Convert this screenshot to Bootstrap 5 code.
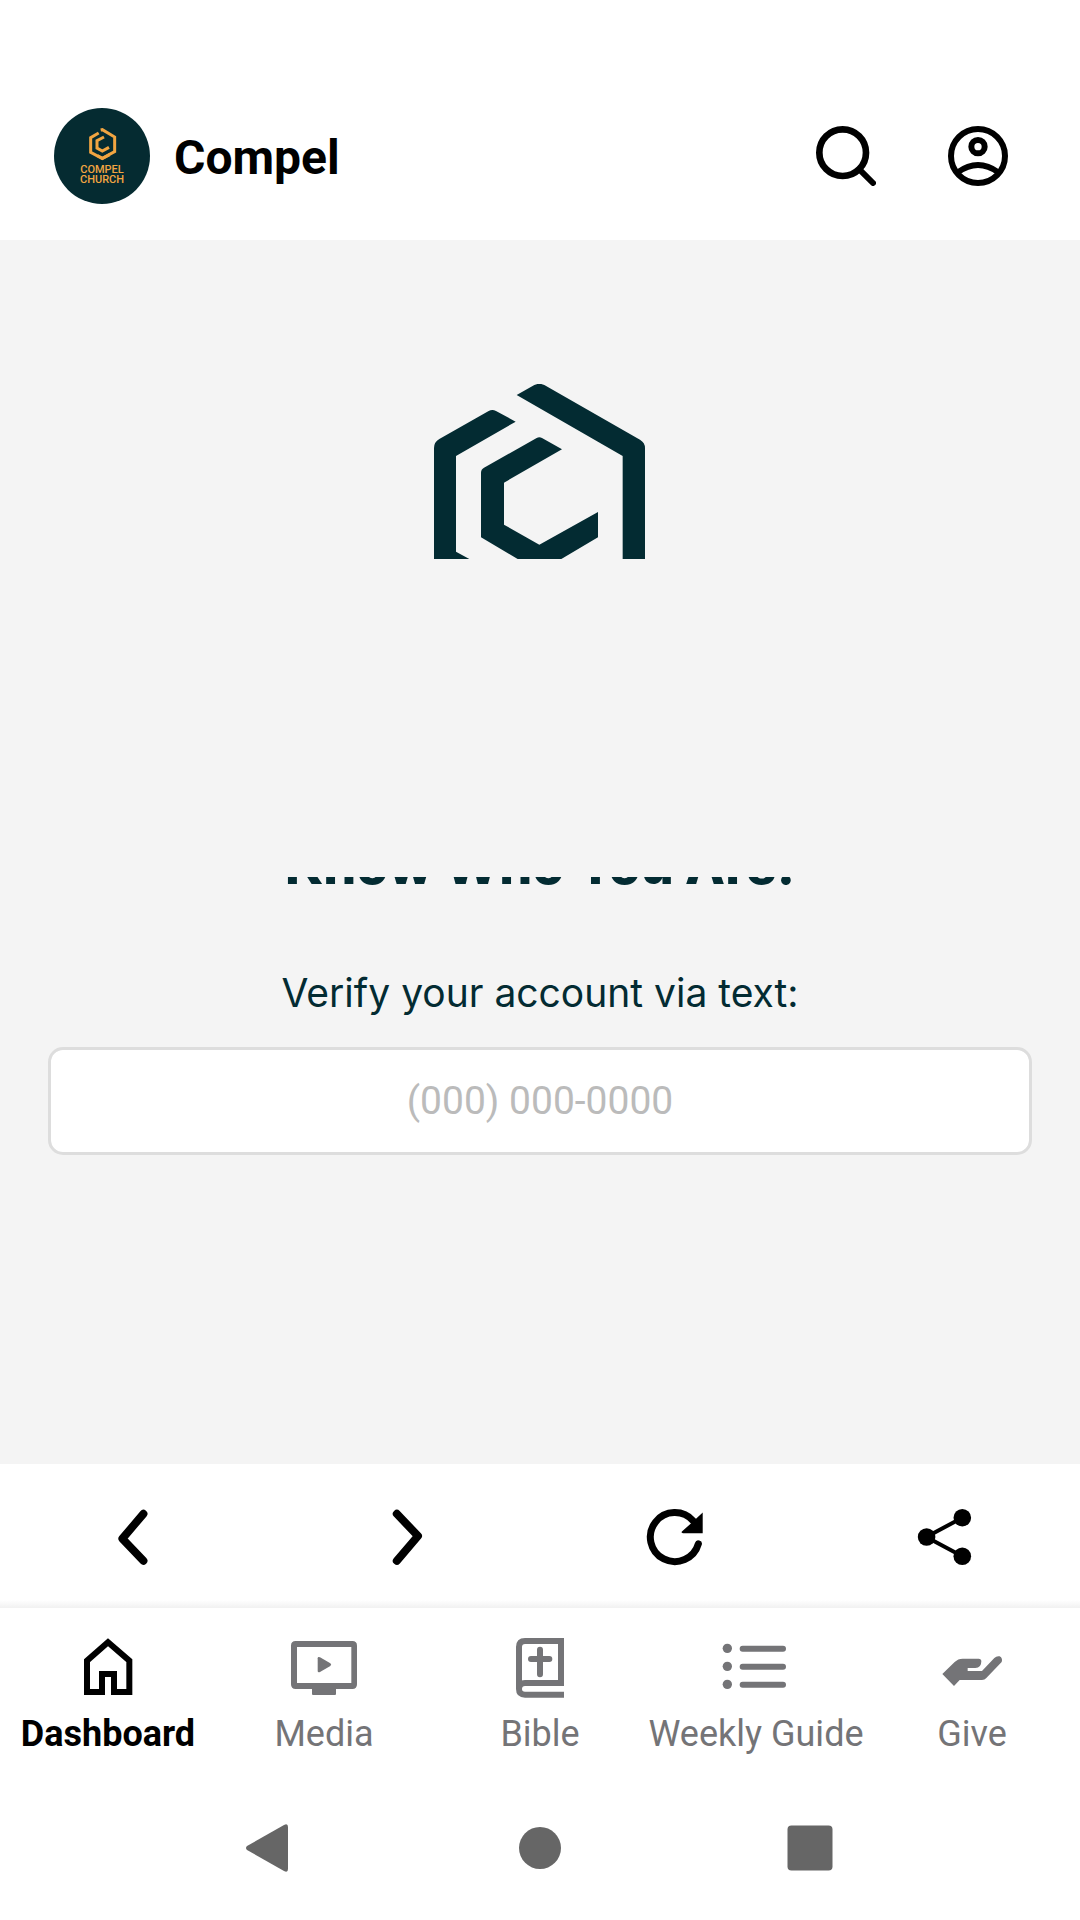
<!DOCTYPE html>
<html lang="en">
<head>
<meta charset="utf-8">
<meta name="viewport" content="width=device-width, initial-scale=1">
<title>Compel</title>
<link href="https://cdn.jsdelivr.net/npm/bootstrap@5.3.0/dist/css/bootstrap.min.css" rel="stylesheet">
<style>
  body { font-family: Roboto, sans-serif; background: #fff; color: #000; }
  svg { display: block; }
  .app-header { padding: 108px 72px 36px 54px; }
  .brand { gap: 24px; color: #000; font-size: 48px; line-height: 60px; font-weight: 700; }
  .brand-name { padding-top: 4px; }
  .header-actions { gap: 72px; }
  .plain-btn { background: none; border: 0; padding: 0; color: inherit; }
  .panel { background: #f4f4f4; color: #032b32; padding: 144px 48px 48px; }
  .headline-strip { height: 8px; margin-top: 318px; overflow: hidden; }
  .headline { font: 800 52px/52px Inter, sans-serif; margin: 0 0 -7px; white-space: nowrap; }
  .verify-label { font: 400 39px/48px Inter, sans-serif; margin: 84px 0 30px; }
  .phone { height: 108px; border: 3px solid #ddd; border-radius: 15px; font-size: 39px; text-align: center; }
  .phone::placeholder { color: #bbb; opacity: 1; }
  .browser-bar { height: 144px; background: linear-gradient(#fff 0, #fff 136px, #f1f1f1 144px); }
  .tab-row { height: 168px; padding-top: 22px; }
  .tab-item { gap: 10px; width: 20%; color: #747477; font-size: 36px; line-height: 44px; text-decoration: none; white-space: nowrap; }
  .tab-item.current { color: #000; font-weight: 700; }
  .system-row { height: 144px; padding: 0 135px; color: #666; }
</style>
</head>
<body class="d-flex flex-column min-vh-100">
<header class="app-header d-flex align-items-center justify-content-between">
  <a href="#" class="brand d-flex align-items-center text-decoration-none">
    <svg width="96" height="96" viewBox="0 0 96 96" aria-hidden="true">
      <circle cx="48" cy="48" r="48" fill="#052b31"/>
      <svg width="96" height="96" viewBox="42 54 288 288" fill="none" stroke="#f2a541" stroke-width="9">
        <path d="M182 120 L187 119 L224 141 V185 L187 205 L172 197"/>
        <path d="M176 129 L152 143 V187 L187 206 L209 194"/>
        <path d="M192 141 L171 152 V174 L187 183 L207 172"/>
      </svg>
      <g fill="#f2a541" font-family="Roboto, sans-serif" font-size="11" font-weight="500" text-anchor="middle">
        <text x="48" y="65">COMPEL</text>
        <text x="48" y="75">CHURCH</text>
      </g>
    </svg>
    <span class="brand-name">Compel</span>
  </a>
  <div class="header-actions d-flex">
    <button type="button" class="plain-btn" aria-label="Search">
      <svg width="60" height="60" viewBox="78 78 180 180" fill="none" stroke="currentColor" stroke-width="20" stroke-linecap="round"><circle cx="158" cy="158" r="70"/><path d="M208 208 L249 249" stroke-width="18"/></svg>
    </button>
    <button type="button" class="plain-btn" aria-label="Account">
      <svg width="60" height="60" viewBox="474 78 180 180" fill="none" stroke="currentColor" stroke-width="18"><circle cx="564" cy="168" r="81"/><circle cx="564" cy="140" r="20"/><path d="M503 217 Q564 173 625 217"/></svg>
    </button>
  </div>
</header>

<main class="panel flex-grow-1 d-flex flex-column align-items-center">
  <svg width="212" height="175" viewBox="72 72 636 525" fill="#032b32" role="img" aria-label="Compel Church">
    <path d="M320 105 L373 75 Q388 68 403 75 L690 239 Q705 248 705 264 V597 H638 V288 Z"/>
    <path d="M317 185 L258 153 Q247 147 236 153 L88 237 Q72 246 72 264 V597 H178 L138 575 V288 Z"/>
    <path d="M456 268 L396 234 Q388 229 380 234 L222 323 Q213 328 213 338 V532 L323 597 H454 L564 532 V456 L388 554 L282 494 V368 Z"/>
  </svg>
  <div class="headline-strip d-flex align-items-end"><h1 class="headline">Know Who You Are.</h1></div>
  <label for="phone" class="verify-label">Verify your account via text:</label>
  <input id="phone" type="tel" class="phone form-control" placeholder="(000) 000-0000">
</main>

<div class="browser-bar d-flex align-items-center justify-content-around" role="toolbar" aria-label="Page controls">
  <button type="button" class="plain-btn" aria-label="Back"><svg width="60" height="60" fill="none" stroke="currentColor" stroke-width="8" stroke-linecap="round" stroke-linejoin="round"><path d="M38.4 7.8 L17.4 32.7 L38.4 54.8"/></svg></button>
  <button type="button" class="plain-btn" aria-label="Forward"><svg width="60" height="60" fill="none" stroke="currentColor" stroke-width="8" stroke-linecap="round" stroke-linejoin="round"><path d="M21.8 7.8 L43 30 L21.8 54.8"/></svg></button>
  <button type="button" class="plain-btn" aria-label="Reload"><svg width="60" height="60" fill="none" stroke="currentColor" stroke-width="7" stroke-linecap="round"><path d="M53.4 37.8 A24.5 24.5 0 1 1 48.3 15"/><path d="M57.7 6.5 V27.3 H38 Q35.5 26.8 37.2 25.3 L47 16.5 Z" fill="currentColor" stroke="none"/></svg></button>
  <button type="button" class="plain-btn" aria-label="Share"><svg width="60" height="60" fill="currentColor"><path d="M47.3 11.7 L11.3 31 L47.3 50.3" fill="none" stroke="currentColor" stroke-width="4"/><circle cx="47.3" cy="11.7" r="8.8"/><circle cx="11.6" cy="31" r="8.8"/><circle cx="47.3" cy="50.3" r="8.8"/></svg></button>
</div>

<nav class="tab-row d-flex" aria-label="Main">
  <a href="#" class="tab-item current d-flex flex-column align-items-center" aria-current="page">
    <svg width="72" height="72" viewBox="216 90 216 216" fill="none" stroke="currentColor" stroke-width="18"><path d="M261 276 V182 L324 127 L388 182 V276 H342 V222 H306 V276 Z"/></svg>
    Dashboard
  </a>
  <a href="#" class="tab-item d-flex flex-column align-items-center">
    <svg width="72" height="72" viewBox="864 90 216 216" fill="currentColor"><path fill-rule="evenodd" d="M887 123 H1057 Q1071 123 1071 137 V253 Q1071 267 1057 267 H1008 V282 Q1008 285 1005 285 H939 Q936 285 936 282 V267 H887 Q873 267 873 253 V137 Q873 123 887 123 Z M891 141 V249 H1054 V141 Z"/><path d="M953 175 Q953 169 960 172 L991 190 Q996 194 991 198 L960 216 Q953 218 953 213 Z"/></svg>
    Media
  </a>
  <a href="#" class="tab-item d-flex flex-column align-items-center">
    <svg width="72" height="72" viewBox="72 90 216 216" fill="none" stroke="currentColor" stroke-width="18"><path d="M252 284 H135 Q117 284 117 267 Q117 249 135 249 H243 V123 H135 Q117 123 117 141 V267"/><path d="M243 240 V258"/><path d="M180 149 V223 M153 177 H208" stroke-linecap="round"/></svg>
    Bible
  </a>
  <a href="#" class="tab-item d-flex flex-column align-items-center">
    <svg width="72" height="72" viewBox="720 90 216 216" fill="currentColor"><circle cx="742" cy="145" r="14"/><circle cx="742" cy="199" r="14"/><circle cx="742" cy="253" r="14"/><path d="M788 146 H909 M788 200 H909 M788 254 H909" stroke="currentColor" stroke-width="18" stroke-linecap="round"/></svg>
    Weekly Guide
  </a>
  <a href="#" class="tab-item d-flex flex-column align-items-center">
    <svg width="72" height="72" viewBox="168 90 216 216" fill="currentColor"><path d="M187 222 L224 186 Q234 176 248 176 H296 Q304 176 304 184 Q304 204 286 204 H263 V213 H306 L343 174 Q350 167 359 169 Q369 175 365 186 L319 234 Q314 240 306 240 H239 L222 258 Z"/></svg>
    Give
  </a>
</nav>

<div class="system-row d-flex align-items-center">
  <div class="w-100 d-flex justify-content-around">
    <button type="button" class="plain-btn" aria-label="System back"><svg width="54" height="54" fill="currentColor"><path d="M4 25 L41 4 Q45 2 45 6 V48 Q45 52 41 50 L4 29 Q2 27 4 25 Z"/></svg></button>
    <button type="button" class="plain-btn" aria-label="System home"><svg width="54" height="54" fill="currentColor"><circle cx="27" cy="27" r="21"/></svg></button>
    <button type="button" class="plain-btn" aria-label="Recent apps"><svg width="54" height="54" fill="currentColor"><rect x="4.500" y="4.500" width="45" height="45" rx="4"/></svg></button>
  </div>
</div>
<script src="https://cdn.jsdelivr.net/npm/bootstrap@5.3.0/dist/js/bootstrap.bundle.min.js"></script>
</body>
</html>
